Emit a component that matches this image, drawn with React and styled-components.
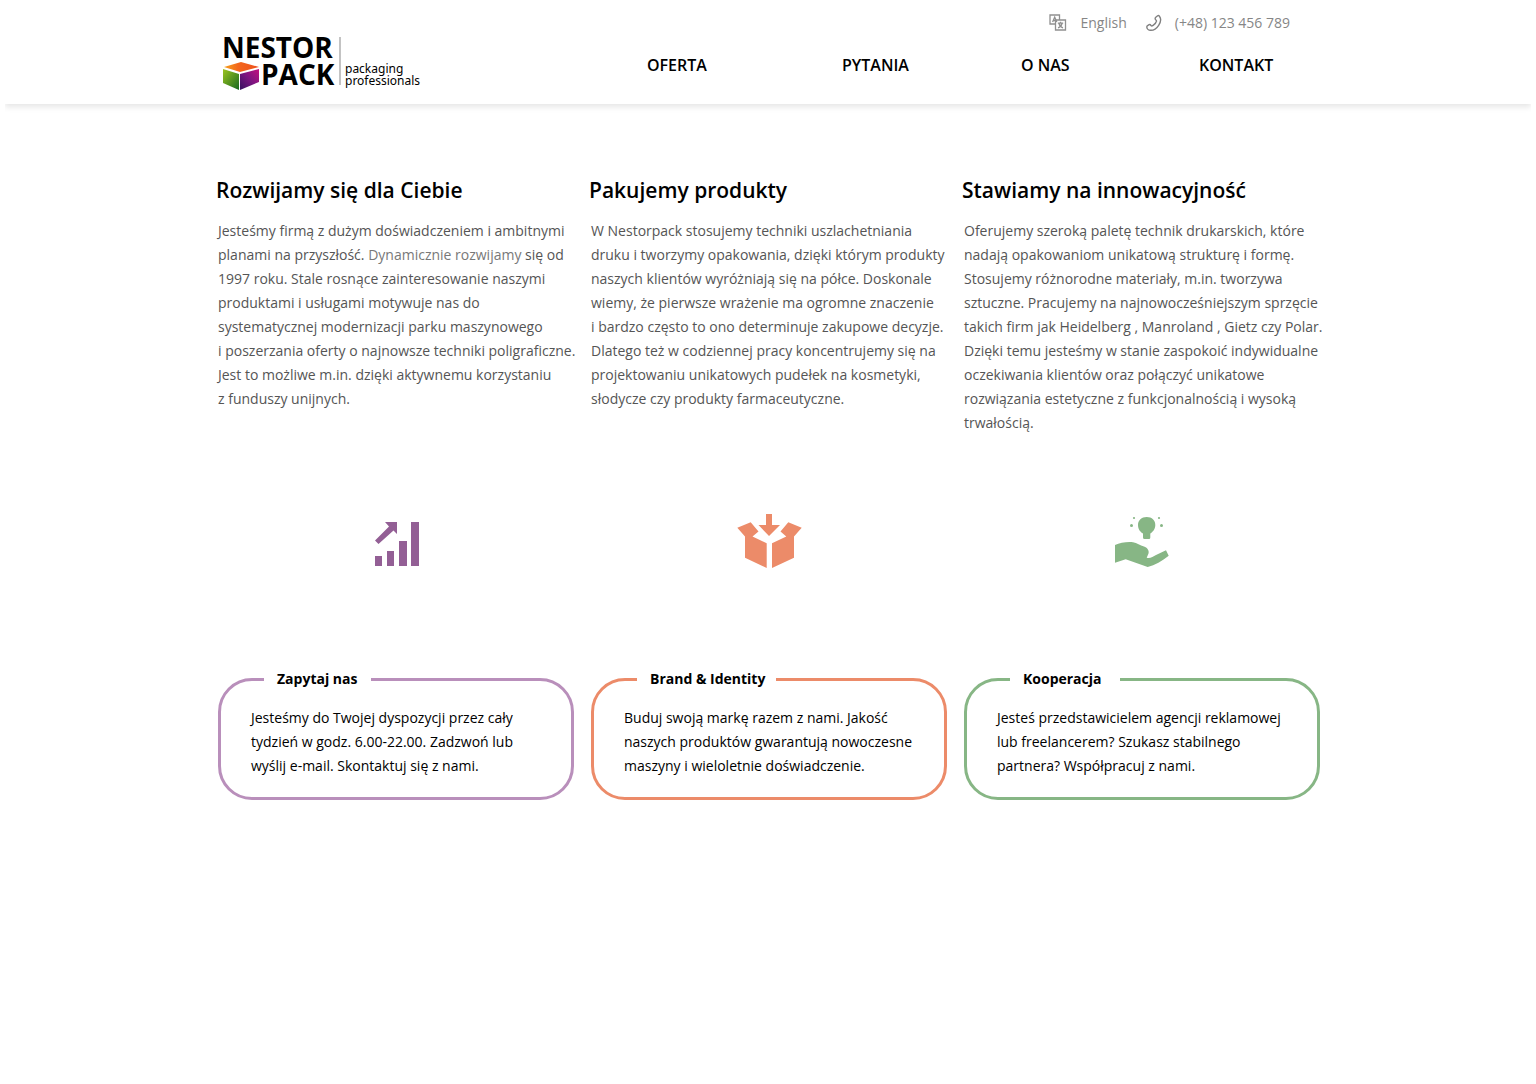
import React from "react";
import styled, { createGlobalStyle } from "styled-components";

const GlobalStyle = createGlobalStyle`
  *, *::before, *::after { box-sizing: border-box; }
  body {
    margin: 0;
    background: #fff;
    color: #000;
    font-family: "Open Sans", "Noto Sans", sans-serif;
    font-size: 14px;
    line-height: 24px;
  }
  h2, h3, p, ul { margin: 0; padding: 0; }
  a { color: inherit; text-decoration: none; }
`;

const Header = styled.header`
  margin: 0 5px;
  background: #fff;
  box-shadow: 0 3px 6px rgba(0, 0, 0, 0.1);
  clip-path: inset(0 0 -12px 0);
`;

const HeaderInner = styled.div`
  max-width: 1104px;
  min-height: 104px;
  margin: 0 auto;
  display: flex;
  justify-content: space-between;
`;

const LogoLink = styled.a`
  display: block;
  padding: 26px 0 0 6px;

  svg { display: block; }
`;

const HeaderSide = styled.div`
  display: flex;
  flex-direction: column;
  gap: 18px;
  padding-top: 11px;
`;

const Contacts = styled.div`
  display: flex;
  justify-content: flex-end;
  gap: 19px;
  padding-right: 30px;
  color: #868686;
`;

const ContactLink = styled.a`
  display: flex;
  align-items: center;
  gap: 13px;
`;

const Nav = styled.nav`
  display: grid;
  grid-template-columns: 195px 179px 178px 121px;
  font-size: 16px;
  font-weight: 600;
`;

const Main = styled.main`
  max-width: 1104px;
  margin: 0 auto;
  padding-top: 73px;
`;

const Columns = styled.div`
  display: grid;
  grid-template-columns: repeat(3, 1fr);
  column-gap: 15px;
`;

const Feature = styled.section`
  h2 {
    font-size: 21px;
    font-weight: 600;
    line-height: 26px;
  }

  p {
    margin: 16px -4px 0 2px;
    color: #555;
  }
`;

const Faded = styled.span`
  color: #787878;
`;

const IconRow = styled(Columns)`
  height: 58px;
  margin-top: 77px;
  padding-left: 4px;
  align-items: center;
  justify-items: center;
`;

const CardRow = styled(Columns)`
  margin-top: 108px;
`;

const Card = styled.section`
  margin-left: 2px;
  min-height: 122px;
  padding: 0 30px;
  border: 3px solid ${(p) => p.$color};
  border-radius: 34px;

  h3 {
    width: ${(p) => p.$notch}px;
    margin: -14px 0 15px 13px;
    padding-left: 13px;
    background: #fff;
    font-size: 14px;
    font-weight: 700;
  }
`;

function Logo() {
  return (
    <svg width="204" height="68" viewBox="0 -8 204 68" role="img" aria-label="Nestor Pack packaging professionals">
      <defs>
        <linearGradient id="top" x1="0" y1="0" x2="1" y2="0">
          <stop offset="0" stopColor="#f6a21b" />
          <stop offset="0.4" stopColor="#f3671d" />
          <stop offset="1" stopColor="#ee4f1c" />
        </linearGradient>
        <linearGradient id="left" x1="0" y1="0" x2="1" y2="1">
          <stop offset="0" stopColor="#9cc41f" />
          <stop offset="1" stopColor="#17691f" />
        </linearGradient>
        <linearGradient id="right" x1="1" y1="0" x2="0" y2="1">
          <stop offset="0" stopColor="#c4107f" />
          <stop offset="0.5" stopColor="#7a1580" />
          <stop offset="1" stopColor="#35125e" />
        </linearGradient>
      </defs>
      <g fontFamily="Open Sans, sans-serif" fontSize="28" fontWeight="700">
        <text x="0" y="24">NESTOR</text>
        <text x="39" y="51">PACK</text>
      </g>
      <path d="M2 33 L19 28 L37 33 L18 38Z" fill="url(#top)" />
      <path d="M1 35 L17 40 V56 L1 49Z" fill="url(#left)" />
      <path d="M18 40 L37 35 V48 L18 56Z" fill="url(#right)" />
      <path d="M118 3V51" stroke="#888" strokeWidth="1" />
      <g fontFamily="Noto Sans, sans-serif" fontSize="12">
        <text x="123" y="39">packaging</text>
        <text x="123" y="51">professionals</text>
      </g>
    </svg>
  );
}

function LanguageIcon() {
  return (
    <svg width="18" height="18" viewBox="0 0 18 18" fill="none" stroke="#909090" strokeWidth="1.3" aria-hidden="true">
      <path d="M6.500 10H1V1H10.500V6" />
      <path d="M6.500 6H16.500V16H6.500Z" />
      <path d="M3.600 8L5.700 3.200L7.800 8M4.400 6.500H7" />
      <path d="M8.800 9.200H14.200M11.500 7.800V9.200M13 9.500C12.500 11.500 11 13.200 9 13.800M10 9.500C10.500 11.500 12 13.200 14 13.800" />
    </svg>
  );
}

function PhoneIcon() {
  return (
    <svg width="16" height="18" viewBox="0 0 16 18" fill="none" stroke="#808080" strokeWidth="1.4" strokeLinejoin="round" aria-hidden="true">
      <path d="M9.800 3.200L11.600 1.800C12.300 1.400 13 1.600 13.400 2.200C17.300 7.200 10.500 16.700 4.500 16.300C2.600 16.200.8 14.600.8 12.900C.8 12.300 1.100 11.900 1.600 11.600L3.100 10.700C3.800 10.300 4.400 10.600 4.900 11.400C5.400 12.200 6.200 12 7.100 11.400C8.700 10.300 10.300 8.300 10.500 7.200C10.600 6.500 10.300 6.200 9.700 5.700C8.900 4.900 9 3.900 9.800 3.200Z" />
    </svg>
  );
}

function GrowthIcon() {
  return (
    <svg width="48" height="50" viewBox="-1 -6 48 50" fill="#935f95" aria-hidden="true">
      <path d="M0 34H7V44H0ZM12 29H19V44H12ZM24 19H32V44H24ZM36 0H44V44H36Z" />
      <path d="M10 0H22V12L18.500 8.500L3.500 22L0 18.400L14 4.500Z" />
    </svg>
  );
}

function BoxIcon() {
  return (
    <svg width="65" height="55" viewBox="0 0 65 55" fill="#ec8b69" aria-hidden="true">
      <path d="M29 0H35V11H43L32 22L21.500 11H29Z" />
      <path d="M.3 13.700L13.700 8.300L21.500 17.500L15.500 22.500L29.700 29.300V54L8 43.700V22.500Z" />
      <path d="M64.700 13.700L51.300 8.300L43.500 17.500L49.300 22.500L35 29.300V54L57 43.700V22.500Z" />
    </svg>
  );
}

function HandIcon() {
  return (
    <svg width="54" height="53" viewBox="0 0 54 53" fill="#87b685" aria-hidden="true">
      <path d="M31.700 2C37 2 40.300 5.500 40.300 10C40.300 14.500 37.500 17 35.300 18.500V22.500Q35.300 24 34 24H29.500Q28 24 28 22.500V18.500C25.500 17 23 14.500 23 10C23 5.500 26.500 2 31.700 2Z" />
      <path d="M0 30C5 28 12 26.500 18 27.300C22 28 25 30.500 29 31.500C32 32.500 34.500 35.500 33.500 38.500L31.700 42.700C35 44 38 41.500 41 40L51 35.300L53.700 40.700C47 46 40 50 32.700 52L10.700 44.300L0 47.700Z" />
      <circle cx="16.500" cy="10.500" r="1.500" />
      <circle cx="19" cy="3" r="1.100" />
      <circle cx="44" cy="3" r="1.100" />
      <circle cx="46.500" cy="10.500" r="1.500" />
    </svg>
  );
}

const navItems = ["OFERTA", "PYTANIA", "O NAS", "KONTAKT"];

const cards = [
  {
    title: "Zapytaj nas",
    color: "#b98fbb",
    notch: 107,
    text: "Jesteśmy do Twojej dyspozycji przez cały tydzień w godz. 6.00-22.00. Zadzwoń lub wyślij e-mail. Skontaktuj się z nami.",
  },
  {
    title: "Brand & Identity",
    color: "#ec8b69",
    notch: 139,
    text: "Buduj swoją markę razem z nami. Jakość naszych produktów gwarantują nowoczesne maszyny i wieloletnie doświadczenie.",
  },
  {
    title: "Kooperacja",
    color: "#87b685",
    notch: 110,
    text: "Jesteś przedstawicielem agencji reklamowej lub freelancerem? Szukasz stabilnego partnera? Współpracuj z nami.",
  },
];

export default function App() {
  return (
    <>
      <GlobalStyle />
      <Header>
        <HeaderInner>
          <LogoLink href="#"><Logo /></LogoLink>
          <HeaderSide>
            <Contacts>
              <ContactLink href="#en"><LanguageIcon />English</ContactLink>
              <ContactLink href="tel:+48123456789"><PhoneIcon />(+48) 123 456 789</ContactLink>
            </Contacts>
            <Nav>
              {navItems.map((item) => (
                <a key={item} href={"#" + item.toLowerCase().replace(" ", "-")}>{item}</a>
              ))}
            </Nav>
          </HeaderSide>
        </HeaderInner>
      </Header>
      <Main>
        <Columns>
          <Feature>
            <h2>Rozwijamy się dla Ciebie</h2>
            <p>
              Jesteśmy firmą z dużym doświadczeniem i ambitnymi planami na przyszłość.{" "}
              <Faded>Dynamicznie rozwijamy</Faded> się od 1997 roku. Stale rosnące zainteresowanie naszymi
              produktami i usługami motywuje nas do systematycznej modernizacji parku
              maszynowego i&nbsp;poszerzania oferty o najnowsze techniki poligraficzne. Jest to możliwe
              m.in. dzięki aktywnemu korzystaniu z&nbsp;funduszy unijnych.
            </p>
          </Feature>
          <Feature>
            <h2>Pakujemy produkty</h2>
            <p>
              W Nestorpack stosujemy techniki uszlachetniania druku i tworzymy opakowania, dzięki którym
              produkty naszych klientów wyróżniają się na półce. Doskonale wiemy, że pierwsze wrażenie ma
              ogromne znaczenie i&nbsp;bardzo często to ono determinuje zakupowe decyzje. Dlatego też w codziennej
              pracy koncentrujemy się na projektowaniu unikatowych pudełek na kosmetyki, słodycze czy
              produkty farmaceutyczne.
            </p>
          </Feature>
          <Feature>
            <h2>Stawiamy na innowacyjność</h2>
            <p>
              Oferujemy szeroką paletę technik drukarskich, które nadają opakowaniom unikatową strukturę
              i formę. Stosujemy różnorodne materiały, m.in. tworzywa sztuczne. Pracujemy na
              najnowocześniejszym sprzęcie takich firm jak Heidelberg , Manroland , Gietz czy Polar. Dzięki temu
              jesteśmy w stanie zaspokoić indywidualne oczekiwania klientów oraz połączyć unikatowe
              rozwiązania estetyczne z funkcjonalnością i wysoką trwałością.
            </p>
          </Feature>
        </Columns>
        <IconRow>
          <GrowthIcon />
          <BoxIcon />
          <HandIcon />
        </IconRow>
        <CardRow>
          {cards.map((card) => (
            <Card key={card.title} $color={card.color} $notch={card.notch}>
              <h3>{card.title}</h3>
              <p>{card.text}</p>
            </Card>
          ))}
        </CardRow>
      </Main>
    </>
  );
}
